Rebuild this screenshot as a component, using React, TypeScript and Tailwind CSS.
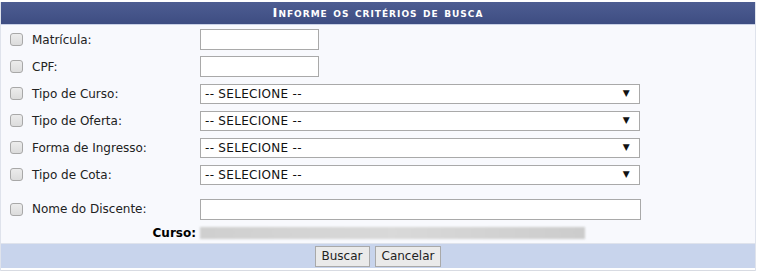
import React from 'react'

const FONT = { fontFamily: 'Verdana, "DejaVu Sans", sans-serif' }

type Row = { label: string; kind: 'text-short' | 'select' | 'text-long'; h: string }

const ROWS: Row[] = [
  { label: 'Matrícula:', kind: 'text-short', h: 'h-[27px]' },
  { label: 'CPF:', kind: 'text-short', h: 'h-[27px]' },
  { label: 'Tipo de Curso:', kind: 'select', h: 'h-[27px]' },
  { label: 'Tipo de Oferta:', kind: 'select', h: 'h-[27px]' },
  { label: 'Forma de Ingresso:', kind: 'select', h: 'h-[27px]' },
  { label: 'Tipo de Cota:', kind: 'select', h: 'h-[27px]' },
]

function Checkbox() {
  return (
    <span className="block w-[13px] h-[13px] rounded-[3px] border border-[#a8a8a8] bg-gradient-to-b from-[#ececec] to-[#dcdcdc]" />
  )
}

function Field({ kind }: { kind: Row['kind'] }) {
  if (kind === 'select') {
    return (
      <div className="w-[440px] h-[20px] border border-[#a9a9a9] bg-white flex items-center justify-between pl-[4px] pr-[9px] text-[12px] tracking-[0.3px] text-[#111]">
        <span>-- SELECIONE --</span>
        <span className="text-[9px] leading-none">▼</span>
      </div>
    )
  }
  if (kind === 'text-long') {
    return <div className="w-[441px] h-[21px] border border-[#a9a9a9] bg-white" />
  }
  return <div className="w-[119px] h-[21px] border border-[#a9a9a9] bg-white" />
}

export default function App() {
  return (
    <div className="w-[757px] h-[271px] bg-white pt-[2px]" style={FONT}>
      <div className="w-[756px] border-l border-r border-[#dfe3ec]">
        {/* Caption */}
        <div className="h-[23px] bg-gradient-to-b from-[#4d5d92] to-[#3e4d82] flex items-center justify-center text-white font-bold text-[13px] tracking-[1px] [font-variant:small-caps] border-b border-[#c9d1e6]">
          Informe os critérios de busca
        </div>

        {/* Body */}
        <div className="bg-[#f8f9fd] pt-[1px] text-[12px] text-[#222]">
          {ROWS.map(r => (
            <div key={r.label} className={`flex items-center ${r.h}`}>
              <div className="w-[31px] pl-[9px]"><Checkbox /></div>
              <div className="w-[168px]">{r.label}</div>
              <Field kind={r.kind} />
            </div>
          ))}

          <div className="flex items-center h-[36px] pt-[6px]">
            <div className="w-[31px] pl-[9px]"><Checkbox /></div>
            <div className="w-[168px]">Nome do Discente:</div>
            <Field kind="text-long" />
          </div>

          <div className="flex items-center h-[19px] pb-[1px]">
            <div className="w-[199px] text-right font-bold text-black pr-[4px]">Curso:</div>
            <div className="w-[385px] h-[12px] bg-gradient-to-r from-[#cfcfcf] via-[#d9d9d9] to-[#cccccc] blur-[1px]" />
          </div>
        </div>

        {/* Footer */}
        <div className="h-[25px] bg-[#c8d4ec] border-t border-[#dfe3ec] flex items-center justify-center gap-[5px] text-[12px]">
          <button className="h-[21px] px-[6px] bg-[#eaeaea] border border-[#a9a9a9] text-[#222]">Buscar</button>
          <button className="h-[21px] px-[6px] bg-[#eaeaea] border border-[#a9a9a9] text-[#222]">Cancelar</button>
        </div>
        <div className="h-[2px] bg-white" />
        <div className="h-[1px] bg-[#d8dbe2]" />
      </div>
    </div>
  )
}
